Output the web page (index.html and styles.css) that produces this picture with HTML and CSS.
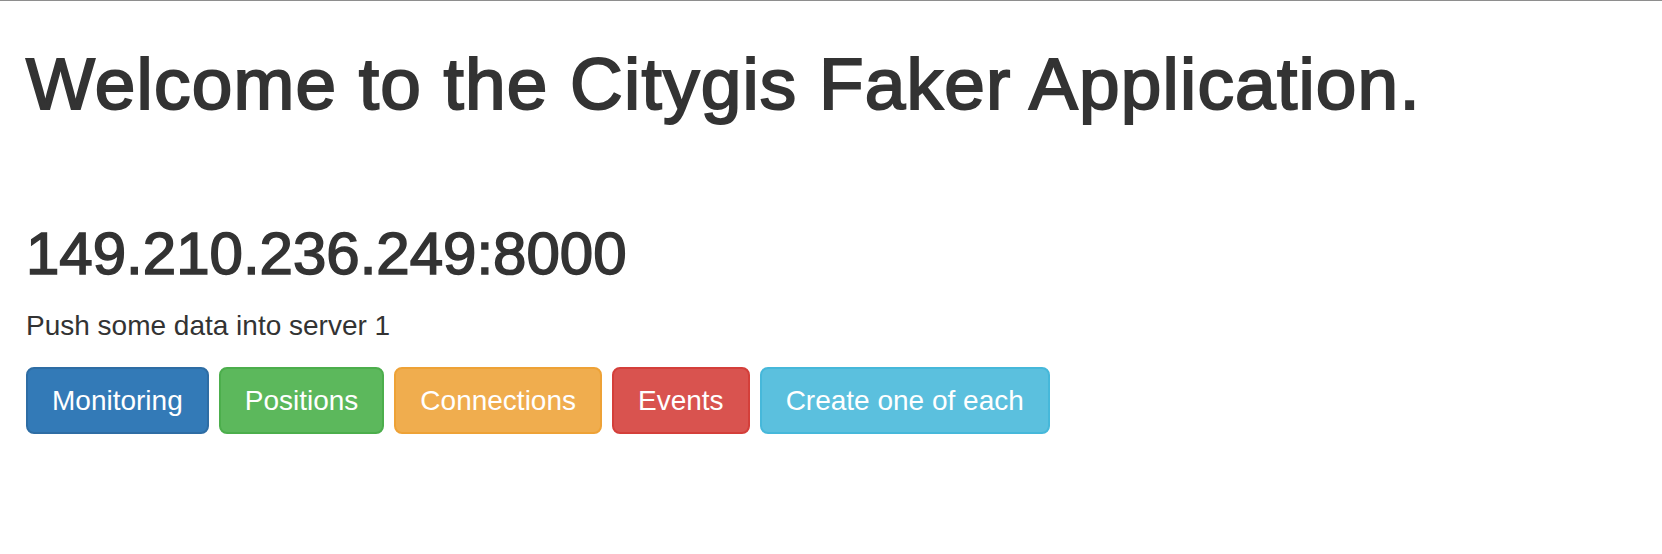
FILE: index.html
```html
<!DOCTYPE html>
<html>
<head>
<meta charset="utf-8">
<link rel="stylesheet" href="styles.css">
</head>
<body>
<div class="container">
  <h1 class="title">Welcome to the Citygis Faker Application.</h1>
  <h2 class="server">149.210.236.249:8000</h2>
  <p class="lead-text">Push some data into server 1</p>
  <div class="actions">
    <button class="btn btn-primary">Monitoring</button>
    <button class="btn btn-success">Positions</button>
    <button class="btn btn-warning">Connections</button>
    <button class="btn btn-danger">Events</button>
    <button class="btn btn-info">Create one of each</button>
  </div>
</div>
</body>
</html>
```
FILE: styles.css
```css
html, body {
  margin: 0;
  padding: 0;
  background: #fff;
}
body {
  border-top: 1px solid #8e8e8e;
  font-family: "Liberation Sans", Arial, Helvetica, sans-serif;
  color: #333;
}
.container {
  padding: 0 26px;
}
.title {
  font-size: 73px;
  font-weight: 400;
  letter-spacing: 1.2px;
  -webkit-text-stroke: 2px #333;
  line-height: 1.1;
  margin: 43px 0 0;
}
.server {
  font-size: 60px;
  font-weight: 400;
  letter-spacing: 0;
  -webkit-text-stroke: 1.6px #333;
  line-height: 1.1;
  margin: 97px 0 19px;
}
.lead-text {
  font-size: 28px;
  line-height: 40px;
  margin: 0 0 21px;
}
.actions {
  display: flex;
  gap: 10px;
}
.btn {
  font-family: inherit;
  font-size: 28px;
  line-height: 40px;
  padding: 12px 24px 11px;
  border: 2px solid transparent;
  border-radius: 8px;
  color: #fff;
  cursor: pointer;
}
.btn-primary { background: #337ab7; border-color: #2e6da4; }
.btn-success { background: #5cb85c; border-color: #4cae4c; }
.btn-warning { background: #f0ad4e; border-color: #eea236; }
.btn-danger { background: #d9534f; border-color: #d43f3a; }
.btn-info { background: #5bc0de; border-color: #46b8da; }
```
